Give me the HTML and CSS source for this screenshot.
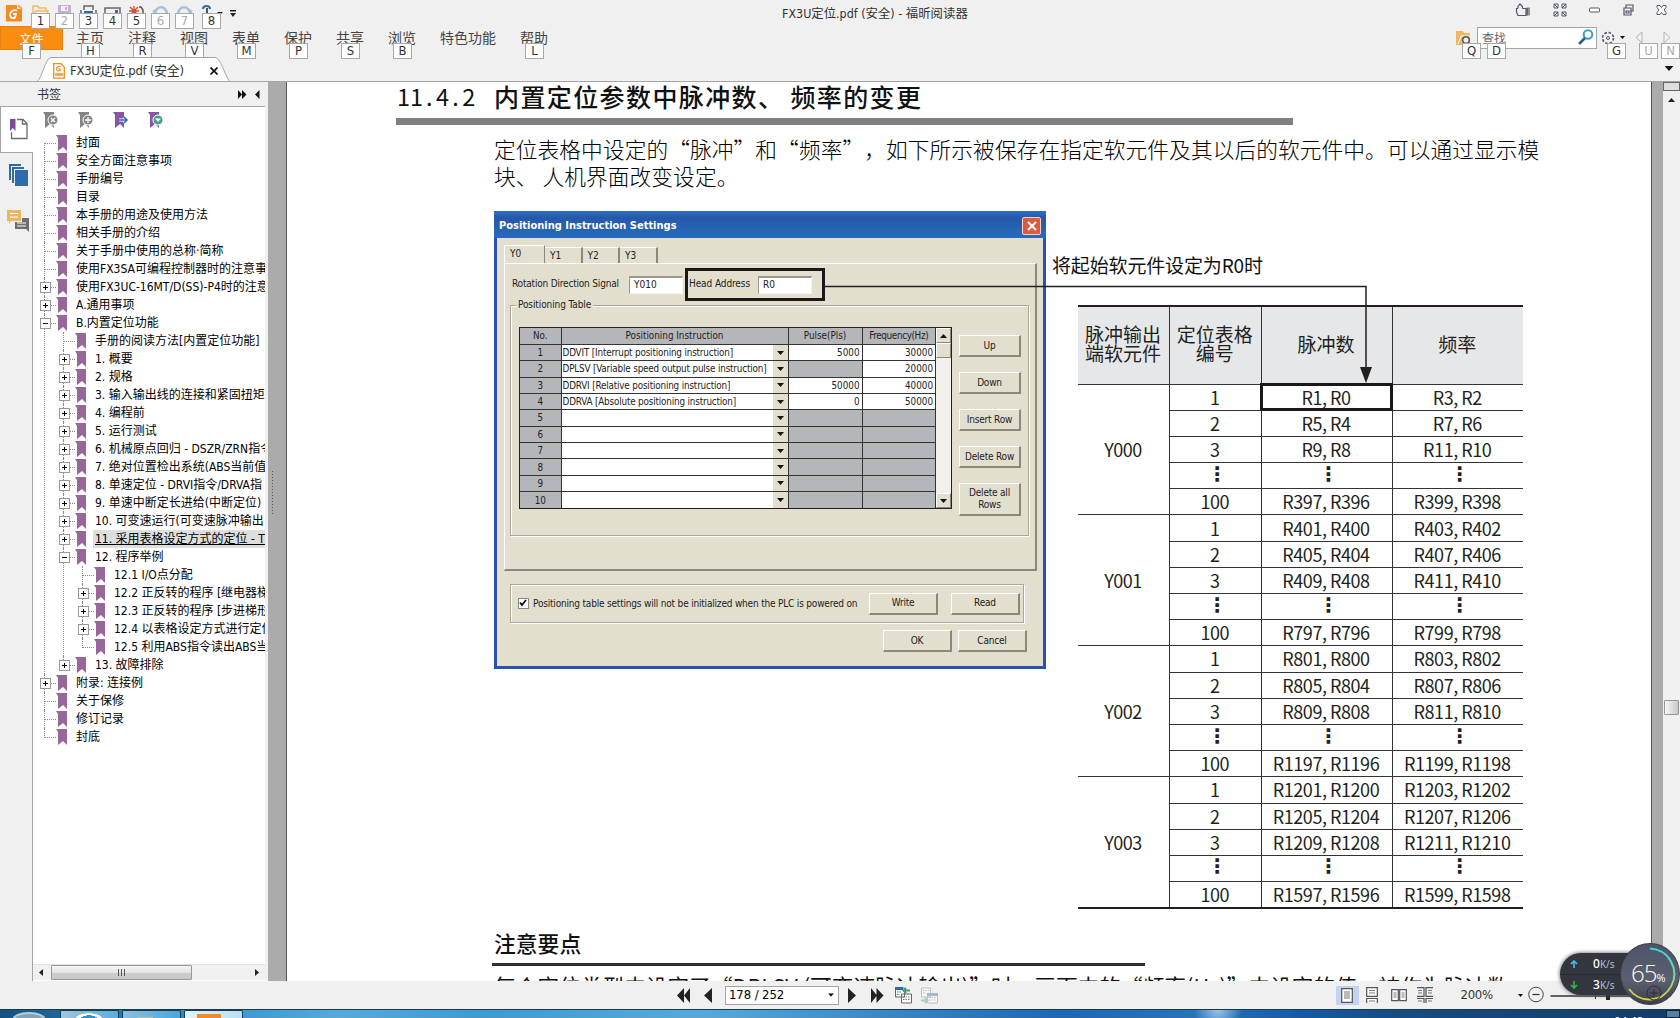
FILE: index.html
```html
<!DOCTYPE html>
<html lang="zh-CN">
<head>
<meta charset="utf-8">
<title>FX3U定位.pdf (安全) - 福昕阅读器</title>
<link rel="stylesheet" href="styles.css">
</head>
<body>
<svg width="0" height="0" class="defs">
  <symbol id="bm" viewBox="0 0 12 16"><path d="M0 0h11v16l-4-4-5 4V3z" fill="#996699"/></symbol>
  <symbol id="tri" viewBox="0 0 7 4"><path d="M0 0h7L3.500 4z" fill="#111"/></symbol>
</svg>
<div class="app">
  <header class="top">
    <div class="title-row">
      <svg class="logo" width="17" height="17" viewBox="0 0 17 17"><path d="M0 0h11v4h5v12.500H0z" fill="#f58a1f"/><path d="M12 0l4 4" stroke="#f58a1f" stroke-width="1.500"/><path d="M11 5.500C7 4 4 7 4 10s3 4 5 2.500L10 9H7" fill="none" stroke="#fff" stroke-width="1.800"/></svg>
      <div class="quick">
        <div class="q"><svg width="17" height="12" viewBox="0 0 17 12"><path d="M1 12V1h5l1 2h7v3M1 12L4 6h12l-2 6" fill="none" stroke="#eebb66" stroke-width="1.500"/></svg><kbd>1</kbd></div>
        <div class="q"><svg width="17" height="12" viewBox="0 0 17 12"><path d="M2 0h13v12H2z" fill="#c5b0d3"/><path d="M5 1h7v5H5z" fill="#f0f0f0"/><path d="M9 2h2v3H9z" fill="#c5b0d3"/></svg><kbd class="off">2</kbd></div>
        <div class="q"><svg width="17" height="12" viewBox="0 0 17 12"><path d="M4 5V1h9v4M1 5v7h15V5" fill="none" stroke="#666" stroke-width="1.500"/><path d="M4 6h9v6H4z" fill="#2b6cb0"/></svg><kbd>3</kbd></div>
        <div class="q"><svg width="17" height="12" viewBox="0 0 17 12"><path d="M1 12V3h15v9" fill="none" stroke="#666" stroke-width="1.500"/><path d="M11 5h3v3h-3z" fill="#2b6cb0"/></svg><kbd>4</kbd></div>
        <div class="q"><svg width="17" height="12" viewBox="0 0 17 12"><path d="M6 1v10M1 6h10M2 2l8 8M10 2l-8 8" stroke="#d34a35" stroke-width="1.300"/><path d="M11 2h2l2 3v7" fill="none" stroke="#555" stroke-width="1.500"/></svg><kbd>5</kbd></div>
        <div class="q"><svg width="17" height="12" viewBox="0 0 17 12"><path d="M1 7l3-2M3 9C4 0 14 0 15 9" fill="none" stroke="#a5c0dc" stroke-width="2.500"/></svg><kbd class="off">6</kbd></div>
        <div class="q"><svg width="17" height="12" viewBox="0 0 17 12"><path d="M16 7l-3-2M2 9C3 0 13 0 14 9" fill="none" stroke="#a5c0dc" stroke-width="2.500"/></svg><kbd class="off">7</kbd></div>
        <div class="q last"><svg width="17" height="12" viewBox="0 0 17 12"><path d="M2 4c0-4 7-4 7 0" fill="none" stroke="#2b6cb0" stroke-width="2"/><path d="M6 3v9M3 12V9" stroke="#555" stroke-width="2"/></svg><kbd>8</kbd></div>
      </div>
      <svg class="qcarets" width="20" height="8" viewBox="0 0 20 8"><path d="M0 2h6L3 5zM13 3h6l-3 4zM13 0h6v1.400h-6z" fill="#222"/></svg>
      <div class="window-title">FX3U定位.pdf (安全) - 福昕阅读器</div>
      <div class="win-buttons">
        <svg width="15" height="14" viewBox="0 0 15 14"><path d="M3 5.500H1.500V9L3 12.500h8V5.500H7.500M3 5.500V3.500L5 1l2.500 2.500v2M12.300 4.500v8M14 4.500v8" fill="none" stroke="#53566b" stroke-width="1.200"/></svg>
        <svg width="14" height="14" viewBox="0 0 14 14"><path d="M1 5V1h4v4zM9 5V1h4v4zM1 13V9h4v4zM9 13V9h4v4zM1 1l4 4M13 1L9 5M1 13l4-4M13 13L9 9" fill="none" stroke="#53566b"/></svg>
        <svg width="11" height="14" viewBox="0 0 11 14"><rect x=".5" y="5" width="10" height="4" rx="1" fill="#fff" stroke="#53566b"/></svg>
        <svg width="11" height="14" viewBox="0 0 11 14"><path d="M3 5V2h7v6H8M1 5h7v7H1zM3 8h3v2H3z" fill="none" stroke="#53566b" stroke-width="1.200"/></svg>
        <svg width="11" height="14" viewBox="0 0 11 14"><path d="M1 2.500h3l1.500 2 1.500-2h3v2L8 7l2 2.500v2H7l-1.500-2-1.500 2H1v-2L3 7 1 4.500z" fill="#fff" stroke="#53566b"/></svg>
      </div>
    </div>
    <div class="menu-row">
      <div class="file">文件<kbd>F</kbd></div>
      <nav class="menu">
        <div class="m">主页<kbd>H</kbd></div><div class="m">注释<kbd>R</kbd></div><div class="m">视图<kbd>V</kbd></div><div class="m">表单<kbd>M</kbd></div><div class="m">保护<kbd>P</kbd></div><div class="m">共享<kbd>S</kbd></div><div class="m">浏览<kbd>B</kbd></div><div class="m wide">特色功能</div><div class="m">帮助<kbd>L</kbd></div>
      </nav>
      <div class="find">
        <svg class="fold" width="15" height="14" viewBox="0 0 15 14"><path d="M0 0h7l1 2h6v12H0z" fill="#edb766"/><path d="M2 13l3-8h9" stroke="#fff" fill="none"/><circle cx="10" cy="9" r="3.300" fill="#eee" stroke="#555" stroke-width="1.500"/></svg>
        <div class="find-box"><span>查找</span><svg width="16" height="16" viewBox="0 0 16 16"><circle cx="10" cy="5.500" r="4.300" fill="none" stroke="#3d9fc4" stroke-width="2"/><path d="M7 9l-6 6" stroke="#2b5c98" stroke-width="2.600"/></svg></div>
        <svg class="gear" width="14" height="14" viewBox="0 0 14 14"><circle cx="7" cy="7" r="5.500" fill="none" stroke="#53566b" stroke-width="1.600" stroke-dasharray="2.600 1.700"/><circle cx="7" cy="7" r="1.500" fill="none" stroke="#53566b"/></svg>
        <svg class="gc" width="5" height="3" viewBox="0 0 7 4"><use href="#tri"/></svg>
        <svg class="nv" width="35" height="14" viewBox="0 0 35 14"><path d="M7 1v11L1 6.500zM29 1v11l6-5.500z" fill="none" stroke="#b4b4bc"/></svg>
        <kbd class="k1">Q</kbd><kbd class="k2">D</kbd><kbd class="k3">G</kbd><kbd class="k4 off">U</kbd><kbd class="k5 off">N</kbd>
      </div>
    </div>
    <div class="tab-row">
      <svg class="tab-shape" width="194" height="25" viewBox="0 0 194 25"><path d="M0 24.500C5 22 8 1 14 .5H178C184 .5 188 20 193 24.500z" fill="#fff" stroke="#a5a5a5"/></svg>
      <div class="tab">
        <svg width="12" height="16" viewBox="0 0 12 16"><path d="M.7.700H8l3.300 3.500v11H.7z" fill="#fff" stroke="#f58a1f" stroke-width="1.300"/><path d="M7.500 4C5 3 3.500 4.500 3.500 6S5 8.500 7 7.500V6H5.500" stroke="#f58a1f" fill="none" stroke-width="1.200"/><path d="M2 10h8v3H2z" fill="#f58a1f" opacity=".75"/></svg>
        <span>FX3U定位.pdf (安全)</span>
        <svg class="tab-x" width="8" height="8" viewBox="0 0 8 8"><path d="M.5.500l7 7M7.500.500l-7 7" stroke="#111" stroke-width="1.700"/></svg>
      </div>
      <svg class="tab-menu" width="10" height="5" viewBox="0 0 7 4"><use href="#tri"/></svg>
    </div>
  </header>

  <main class="work">
    <aside class="side">
      <div class="side-head"><span>书签</span><svg width="22" height="9" viewBox="0 0 22 9"><path d="M0 0l4 4.500L0 9zM4 0l4.500 4.500L4 9zM21.500 0v9L17 4.500z" fill="#111"/></svg></div>
      <div class="side-body">
        <div class="rail">
          <div class="rail-tab"><svg width="18" height="22" viewBox="0 0 18 22"><path d="M7 1.500h6l4 4V20.500H1.500V14M12.500 1.500v4.500H17" fill="none" stroke="#6b6b6b" stroke-width="1.300"/><path d="M0 1h5.500v12L2.800 10 0 13z" fill="#7c4f95"/></svg></div>
          <svg width="19" height="22" viewBox="0 0 19 22"><path d="M0 0h12v2H2v14H0zM3 3h12v2H5v14H3zM6 6h13v16H6z" fill="#2e6bab"/></svg>
          <svg width="23" height="22" viewBox="0 0 23 22"><path d="M0 0h14v11H4l-2 3v-3H0z" fill="#eab765"/><path d="M3 3.500h8M3 7h8" stroke="#fff"/><path d="M15 8h7v14l-3-3H8v-7h7z" fill="#6e6e6e"/><path d="M10 13h9M10 16h9" stroke="#fff"/></svg>
        </div>
        <div class="panel">
          <div class="tools">
            <svg width="16" height="17" viewBox="0 0 16 17"><path d="M0 0h11v16l-4-4-5 4V3z" fill="#858585"/><circle cx="10" cy="8" r="5" fill="#858585" stroke="#fff"/><path d="M8 6l4 4M12 6l-4 4" stroke="#fff" stroke-width="1.300"/></svg>
            <svg width="16" height="17" viewBox="0 0 16 17"><path d="M0 0h11v16l-4-4-5 4V3z" fill="#858585"/><circle cx="10" cy="8" r="5" fill="#858585" stroke="#fff"/><path d="M7 8h6M10 5v6" stroke="#fff" stroke-width="1.300"/></svg>
            <svg width="16" height="17" viewBox="0 0 16 17"><path d="M0 0h11v16l-4-4-5 4V3z" fill="#8a55a4"/><path d="M6 8h8M11 5l3 3-3 3" fill="none" stroke="#fff" stroke-width="3"/><path d="M6 8h8M11 5l3 3-3 3" fill="none" stroke="#2e6bab" stroke-width="1.500"/></svg>
            <svg width="16" height="17" viewBox="0 0 16 17"><path d="M0 0h11v16l-4-4-5 4V3z" fill="#8a55a4"/><circle cx="10" cy="8" r="5" fill="#45a27c" stroke="#fff"/><path d="M7 6.500h6L10 10z" fill="#fff"/></svg>
          </div>
          <ul class="tree">
            <li><div class="row"><svg><use href="#bm"/></svg><span>封面</span></div></li>
            <li><div class="row"><svg><use href="#bm"/></svg><span>安全方面注意事项</span></div></li>
            <li><div class="row"><svg><use href="#bm"/></svg><span>手册编号</span></div></li>
            <li><div class="row"><svg><use href="#bm"/></svg><span>目录</span></div></li>
            <li><div class="row"><svg><use href="#bm"/></svg><span>本手册的用途及使用方法</span></div></li>
            <li><div class="row"><svg><use href="#bm"/></svg><span>相关手册的介绍</span></div></li>
            <li><div class="row"><svg><use href="#bm"/></svg><span>关于手册中使用的总称·简称</span></div></li>
            <li><div class="row"><svg><use href="#bm"/></svg><span>使用FX3SA可编程控制器时的注意事</span></div></li>
            <li><div class="row plus"><svg><use href="#bm"/></svg><span>使用FX3UC-16MT/D(SS)-P4时的注意</span></div></li>
            <li><div class="row plus"><svg><use href="#bm"/></svg><span>A.通用事项</span></div></li>
            <li><div class="row minus"><svg><use href="#bm"/></svg><span>B.内置定位功能</span></div>
              <ul>
                <li><div class="row"><svg><use href="#bm"/></svg><span>手册的阅读方法[内置定位功能]</span></div></li>
                <li><div class="row plus"><svg><use href="#bm"/></svg><span>1. 概要</span></div></li>
                <li><div class="row plus"><svg><use href="#bm"/></svg><span>2. 规格</span></div></li>
                <li><div class="row plus"><svg><use href="#bm"/></svg><span>3. 输入输出线的连接和紧固扭矩</span></div></li>
                <li><div class="row plus"><svg><use href="#bm"/></svg><span>4. 编程前</span></div></li>
                <li><div class="row plus"><svg><use href="#bm"/></svg><span>5. 运行测试</span></div></li>
                <li><div class="row plus"><svg><use href="#bm"/></svg><span>6. 机械原点回归 - DSZR/ZRN指令</span></div></li>
                <li><div class="row plus"><svg><use href="#bm"/></svg><span>7. 绝对位置检出系统(ABS当前值</span></div></li>
                <li><div class="row plus"><svg><use href="#bm"/></svg><span>8. 单速定位 - DRVI指令/DRVA指</span></div></li>
                <li><div class="row plus"><svg><use href="#bm"/></svg><span>9. 单速中断定长进给(中断定位)</span></div></li>
                <li><div class="row plus"><svg><use href="#bm"/></svg><span>10. 可变速运行(可变速脉冲输出</span></div></li>
                <li><div class="row plus current"><svg><use href="#bm"/></svg><span>11. 采用表格设定方式的定位 - T</span></div></li>
                <li><div class="row minus"><svg><use href="#bm"/></svg><span>12. 程序举例</span></div>
                  <ul>
                    <li><div class="row"><svg><use href="#bm"/></svg><span>12.1 I/O点分配</span></div></li>
                    <li><div class="row plus"><svg><use href="#bm"/></svg><span>12.2 正反转的程序 [继电器梯</span></div></li>
                    <li><div class="row plus"><svg><use href="#bm"/></svg><span>12.3 正反转的程序 [步进梯形</span></div></li>
                    <li><div class="row plus"><svg><use href="#bm"/></svg><span>12.4 以表格设定方式进行定位</span></div></li>
                    <li><div class="row"><svg><use href="#bm"/></svg><span>12.5 利用ABS指令读出ABS当</span></div></li>
                  </ul>
                </li>
                <li><div class="row plus"><svg><use href="#bm"/></svg><span>13. 故障排除</span></div></li>
              </ul>
            </li>
            <li><div class="row plus"><svg><use href="#bm"/></svg><span>附录: 连接例</span></div></li>
            <li><div class="row"><svg><use href="#bm"/></svg><span>关于保修</span></div></li>
            <li><div class="row"><svg><use href="#bm"/></svg><span>修订记录</span></div></li>
            <li><div class="row"><svg><use href="#bm"/></svg><span>封底</span></div></li>
          </ul>
          <div class="hscroll">
            <svg width="4" height="7" viewBox="0 0 4 7"><path d="M4 0v7L0 3.500z" fill="#222"/></svg>
            <div class="hthumb"><i></i><i></i><i></i></div>
            <svg width="4" height="7" viewBox="0 0 4 7"><path d="M0 0v7l4-3.500z" fill="#222"/></svg>
          </div>
        </div>
      </div>
    </aside>
    <div class="splitter"><i></i></div>

    <article class="page">
      <h1><span class="num">11<i>.</i>4<i>.</i>2</span><span class="h-a">内置定位参数中脉冲数、</span><span class="h-b">频率的变更</span></h1>
      <p class="intro">定位表格中设定的“脉冲”和“频率”，如下所示被保存在指定软元件及其以后的软元件中。可以通过显示模<br>块、&nbsp;人机界面改变设定。</p>
      <section class="figure">
        <div class="dialog">
          <div class="dlg-title"><b>Positioning Instruction Settings</b><span class="dlg-close"><svg width="10" height="10" viewBox="0 0 10 10"><path d="M1 1l8 8M9 1L1 9" stroke="#fff" stroke-width="2"/></svg></span></div>
          <div class="dlg-tabs"><span class="on">Y0</span><span>Y1</span><span>Y2</span><span>Y3</span></div>
          <div class="dlg-panel">
            <div class="params">
              <label class="rot">Rotation Direction Signal</label><span class="inp">Y010</span>
              <div class="head-box"><label>Head Address</label><span class="inp">R0</span></div>
            </div>
            <div class="group">
              <span class="legend">Positioning Table</span>
              <div class="grid-wrap">
                <table class="pt">
                  <colgroup><col class="c1"><col class="c2"><col class="cd"><col class="c3"><col></colgroup>
                  <tr><th>No.</th><th colspan="2">Positioning Instruction</th><th>Pulse(Pls)</th><th class="c4">Frequency(Hz)</th></tr>
                  <tr><th>1</th><td class="n">DDVIT [Interrupt positioning instruction]</td><td class="d"><svg><use href="#tri"/></svg></td><td>5000</td><td>30000</td></tr>
                  <tr><th>2</th><td class="n">DPLSV [Variable speed output pulse instruction]</td><td class="d"><svg><use href="#tri"/></svg></td><td class="g"></td><td>20000</td></tr>
                  <tr><th>3</th><td class="n">DDRVI [Relative positioning instruction]</td><td class="d"><svg><use href="#tri"/></svg></td><td>50000</td><td>40000</td></tr>
                  <tr><th>4</th><td class="n">DDRVA [Absolute positioning instruction]</td><td class="d"><svg><use href="#tri"/></svg></td><td>0</td><td>50000</td></tr>
                  <tr><th>5</th><td class="n"></td><td class="d"><svg><use href="#tri"/></svg></td><td class="g"></td><td class="g"></td></tr>
                  <tr><th>6</th><td class="n"></td><td class="d"><svg><use href="#tri"/></svg></td><td class="g"></td><td class="g"></td></tr>
                  <tr><th>7</th><td class="n"></td><td class="d"><svg><use href="#tri"/></svg></td><td class="g"></td><td class="g"></td></tr>
                  <tr><th>8</th><td class="n"></td><td class="d"><svg><use href="#tri"/></svg></td><td class="g"></td><td class="g"></td></tr>
                  <tr><th>9</th><td class="n"></td><td class="d"><svg><use href="#tri"/></svg></td><td class="g"></td><td class="g"></td></tr>
                  <tr><th>10</th><td class="n"></td><td class="d"><svg><use href="#tri"/></svg></td><td class="g"></td><td class="g"></td></tr>
                </table>
                <div class="pt-scroll"><span><svg class="up"><use href="#tri"/></svg></span><span></span><em></em><span><svg><use href="#tri"/></svg></span></div>
              </div>
              <div class="side-btns"><span class="btn">Up</span><span class="btn">Down</span><span class="btn">Insert Row</span><span class="btn">Delete Row</span><span class="btn two">Delete all<br>Rows</span></div>
            </div>
          </div>
          <div class="keep"><span class="chk"><svg width="8" height="8" viewBox="0 0 8 8"><path d="M1 3.500l2 2.500 4-5" fill="none" stroke="#111" stroke-width="1.800"/></svg></span><label>Positioning table settings will not be initialized when the PLC is powered on</label><span class="btn">Write</span><span class="btn">Read</span></div>
          <div class="dlg-foot"><span class="btn">OK</span><span class="btn">Cancel</span></div>
        </div>
        <div class="mapping">
          <div class="note">将起始软元件设定为R0时</div>
          <table class="map">
            <tr class="hd"><th class="a">脉冲输出<br>端软元件</th><th class="b">定位表格<br>编号</th><th class="c">脉冲数</th><th>频率</th></tr>
            <tr><td rowspan="5">Y000</td><td>1</td><td class="hot">R1, R0</td><td>R3, R2</td></tr>
            <tr><td>2</td><td>R5, R4</td><td>R7, R6</td></tr>
            <tr><td>3</td><td>R9, R8</td><td>R11, R10</td></tr>
            <tr class="dots"><td>⋮</td><td>⋮</td><td>⋮</td></tr>
            <tr><td>100</td><td>R397, R396</td><td>R399, R398</td></tr>
            <tr><td rowspan="5">Y001</td><td>1</td><td>R401, R400</td><td>R403, R402</td></tr>
            <tr><td>2</td><td>R405, R404</td><td>R407, R406</td></tr>
            <tr><td>3</td><td>R409, R408</td><td>R411, R410</td></tr>
            <tr class="dots"><td>⋮</td><td>⋮</td><td>⋮</td></tr>
            <tr><td>100</td><td>R797, R796</td><td>R799, R798</td></tr>
            <tr><td rowspan="5">Y002</td><td>1</td><td>R801, R800</td><td>R803, R802</td></tr>
            <tr><td>2</td><td>R805, R804</td><td>R807, R806</td></tr>
            <tr><td>3</td><td>R809, R808</td><td>R811, R810</td></tr>
            <tr class="dots"><td>⋮</td><td>⋮</td><td>⋮</td></tr>
            <tr><td>100</td><td>R1197, R1196</td><td>R1199, R1198</td></tr>
            <tr><td rowspan="5">Y003</td><td>1</td><td>R1201, R1200</td><td>R1203, R1202</td></tr>
            <tr><td>2</td><td>R1205, R1204</td><td>R1207, R1206</td></tr>
            <tr><td>3</td><td>R1209, R1208</td><td>R1211, R1210</td></tr>
            <tr class="dots"><td>⋮</td><td>⋮</td><td>⋮</td></tr>
            <tr><td>100</td><td>R1597, R1596</td><td>R1599, R1598</td></tr>
          </table>
        </div>
        <svg class="leader" width="550" height="100" viewBox="0 0 550 100"><path d="M0 1.500H541V84" fill="none" stroke="#231f20" stroke-width="1.500"/><path d="M535 82h12l-6 16z" fill="#231f20"/></svg>
      </section>
      <h2>注意要点</h2>
      <p class="cut">每个定位类型中设定了“DPLSV (可变速脉冲输出)”时，画面中的“频率(Hz)”中设定的值，被作为脉冲数</p>
    </article>
    <div class="gutter"></div>
    <div class="vscroll"><div class="vsplit"></div><svg width="7" height="4" viewBox="0 0 7 4"><path d="M0 4h7L3.500 0z" fill="#222"/></svg><div class="vthumb"></div></div>
  </main>

  <footer class="status">
    <div class="pager">
      <svg width="14" height="15" viewBox="0 0 14 15"><path d="M7 0v15L0 7.500zM13 0v15L7 7.500z" fill="#222"/></svg>
      <svg width="9" height="15" viewBox="0 0 9 15"><path d="M8 0v15L0 7.500z" fill="#222"/></svg>
      <div class="page-box"><span>178 / 252</span><svg width="6" height="4" viewBox="0 0 7 4"><use href="#tri"/></svg></div>
      <svg width="9" height="15" viewBox="0 0 9 15"><path d="M1 0v15l8-7.500z" fill="#222"/></svg>
      <svg width="14" height="15" viewBox="0 0 14 15"><path d="M1 0l6 7.500L1 15zM6.500 0l7 7.500-7 7.500z" fill="#222"/></svg>
      <svg width="17" height="17" viewBox="0 0 17 17"><path d="M.5 1h9v9h-9zM6.500 7h10v9h-10z" fill="#fff" stroke="#666"/><path d="M0 0h8v3H0z" fill="#2b6cb0"/><path d="M9 3.500h6M11 1L8.500 3.500 11 6" fill="none" stroke="#3e9f78" stroke-width="2"/><path d="M8 10h7M8 12.500h7M2 5h4M2 7.500h3" stroke="#777" stroke-dasharray="1.500 1"/></svg>
      <svg width="17" height="17" viewBox="0 0 17 17" opacity=".4"><path d="M.5 1h9v9h-9zM6.500 7h10v9h-10z" fill="#fff" stroke="#777"/><path d="M6 6h11v3H6z" fill="#2b6cb0"/><path d="M0 13.500h6M4 11l2.500 2.500L4 16" fill="none" stroke="#3e9f78" stroke-width="2"/><path d="M8 10.500h7M8 13h7M2 3.500h6M2 6h3" stroke="#777" stroke-dasharray="1.500 1"/></svg>
    </div>
    <div class="views">
      <span class="sel"><svg width="12" height="15" viewBox="0 0 12 15"><path d="M.7.700h10.600v13.600H.7z" fill="#fff" stroke="#555" stroke-width="1.200"/><path d="M3 4h6M3 6h6M3 8h6M3 10h6" stroke="#777"/></svg></span>
      <svg width="12" height="16" viewBox="0 0 12 16"><path d="M.7.700h10.600v8.600H.7zM.7 16v-4.500h10.600V16" fill="#fff" stroke="#555" stroke-width="1.200"/><path d="M3 3.500h6M3 6h6M3 14h6" stroke="#777"/></svg>
      <svg width="16" height="13" viewBox="0 0 16 13"><path d="M.7.700h6.600v11H.7zM8.700.700h6.600v11H8.700z" fill="#fff" stroke="#555" stroke-width="1.200"/><path d="M2.500 4h3M2.500 6h3M2.500 8h3M10.500 4h3M10.500 6h3M10.500 8h3" stroke="#777"/></svg>
      <svg width="16" height="16" viewBox="0 0 16 16"><path d="M0 .700h7v8.600H0M16 .700H9v8.600h7M0 11.500h7V16M16 11.500H9V16" fill="none" stroke="#555" stroke-width="1.200"/><path d="M1 3.500h4M1 6h4M11 3.500h4M11 6h4M1 14h4M11 14h4" stroke="#777"/></svg>
    </div>
    <div class="zoom"><span>200%</span><svg width="5" height="3" viewBox="0 0 7 4"><use href="#tri"/></svg>
      <svg width="136" height="18" viewBox="0 0 136 18"><circle cx="8" cy="8.500" r="7.300" fill="none" stroke="#444"/><path d="M4.500 8.500h7" stroke="#333" stroke-width="1.200"/><path d="M22.500 10h90" stroke="#333" stroke-width="1.500"/><path d="M67.500 7v6" stroke="#333"/><path d="M78 6h4v8h-4z" fill="#222"/><circle cx="126" cy="8.500" r="7.300" fill="none" stroke="#444"/></svg>
    </div>
  </footer>
  <div class="taskbar"><span class="orb"></span><span class="task t1"></span><span class="task t2"></span><span class="task t3"></span><span class="clock">14:43</span><span class="desk"></span></div>

  <div class="meter">
    <div class="pill">
      <div><svg width="8" height="8" viewBox="0 0 8 8"><path d="M4 8V1M1 4l3-3 3 3" fill="none" stroke="#4db5ee" stroke-width="1.700"/></svg><b>0</b><small>K/s</small></div>
      <div><svg width="8" height="8" viewBox="0 0 8 8"><path d="M4 0v7M1 4l3 3 3-3" fill="none" stroke="#31b24a" stroke-width="1.700"/></svg><b>3</b><small>K/s</small></div>
    </div>
    <div class="ball">
      <svg width="60" height="62" viewBox="0 0 60 62"><defs><linearGradient id="arc" x1="0" y1="0" x2="0" y2="1"><stop offset="0" stop-color="#3fd3e0"/><stop offset=".55" stop-color="#6fdc9a"/><stop offset="1" stop-color="#e0cf3c"/></linearGradient></defs><path d="M30 5.500A25 25.500 0 1 1 9 46" fill="none" stroke="url(#arc)" stroke-width="2"/><circle cx="34" cy="50" r="7" fill="none" stroke="#2d303a"/><path d="M30 50h8M34 46v8" stroke="#2d303a"/></svg>
      <span>65<small>%</small></span>
    </div>
  </div>
</div>
</body>
</html>
```
FILE: styles.css
```css
* { box-sizing: border-box; }
body {
  margin: 0;
  width: 1680px;
  height: 1018px;
  overflow: hidden;
  background: #f0f0f0;
  font: 12px/18px "DejaVu Sans Condensed", "Noto Sans CJK SC", sans-serif;
  color: #000;
}
svg { display: block; flex: none; }
.defs { position: absolute; }
.app { position: relative; display: flex; flex-direction: column; width: 1680px; height: 1018px; overflow: hidden; }

kbd {
  width: 19px; height: 16px;
  border: 1px solid #a8a8a8;
  background: #fff;
  font: 13px/14px "DejaVu Sans Condensed", sans-serif;
  text-align: center;
  color: #333;
}
kbd.off { color: #aaa; }

/* header */
.top { height: 82px; flex: none; border-bottom: 1px solid #a5a5a5; }
.title-row { display: flex; height: 26px; position: relative; }
.logo { margin: 5px 0 0 6px; }
.quick { display: flex; margin-left: 8px; gap: 5px; }
.q { width: 19px; padding-top: 5px; position: relative; }
.q svg { margin-left: 1px; }
.q kbd { position: absolute; left: 0; top: 13px; z-index: 2; }
.q.last { margin-left: 3px; }
.q.last svg { margin-left: -1px; }
.qcarets { margin: 10px 0 0 -4px; }
.window-title { margin-left: 545px; padding-top: 4px; font-size: 12.400px; line-height: 20px; color: #333; white-space: nowrap; width: 240px; }
.win-buttons { margin: 3px 13px 0 auto; display: flex; gap: 22.500px; }
.menu-row { display: flex; height: 31px; font-size: 14px; color: #444; }
.file { width: 63px; height: 24px; background: #fa8c0f; border: 1px solid #e8820e; color: #fff; font-size: 12px; line-height: 27px; text-align: center; position: relative; }
.file kbd { position: absolute; left: 21px; top: 16px; }
.menu { display: flex; margin-left: 12px; gap: 22px; }
.m { width: 30px; text-align: center; line-height: 24px; position: relative; white-space: nowrap; }
.m kbd { position: absolute; left: 6px; top: 17px; }
.m.wide { width: 58px; }
.find { position: relative; display: flex; margin-left: auto; width: 224px; }
.fold { margin-top: 5px; }
.find-box { margin: 1px 0 0 6px; width: 120px; height: 22px; border: 1px solid #a5a5a5; background: #fff; display: flex; justify-content: space-between; padding: 1px 2px 0 4px; font-size: 12px; color: #666; line-height: 20px; }
.gear { margin: 5px 0 0 4px; }
.gc { margin: 10px 0 0 5px; }
.nv { margin: 5px 0 0 10px; }
.find kbd { position: absolute; top: 17px; }
.k1 { left: 6px; } .k2 { left: 31px; } .k3 { left: 151px; } .k4 { left: 183px; } .k5 { left: 205px; }
.tab-row { height: 25px; position: relative; display: flex; }
.tab-shape { position: absolute; left: 37px; top: 0; }
.tab { position: relative; display: flex; align-items: center; height: 24px; margin: 2px 0 0 53px; gap: 5px; width: 165px; font-size: 13px; color: #333; white-space: nowrap; letter-spacing: -.3px; }
.tab-x { margin-left: auto; }
.tab-menu { margin: 9px 6px 0 auto; }

/* work area */
.work { display: flex; height: 899px; flex: none; }
.side { width: 268px; flex: none; display: flex; flex-direction: column; }
.side-head { height: 24px; display: flex; justify-content: space-between; padding: 5px 8px 0 37px; color: #333; line-height: 17px; }
.side-head svg { margin-top: 3px; }
.side-body { display: flex; flex: 1; width: 265px; border-top: 1px solid #a5a5a5; min-height: 0; }
.rail { width: 33px; flex: none; border-right: 1px solid #a5a5a5; }
.rail-tab { width: 33px; height: 46px; background: #fff; border: 1px solid #a5a5a5; border-width: 0 0 1px 1px; padding: 11px 0 0 9px; }
.rail > svg { margin: 11px 0 0 9px; }
.rail > svg + svg { margin: 24px 0 0 7px; }
.panel { flex: 1; background: #fff; min-width: 0; display: flex; flex-direction: column; }
.tools { display: flex; gap: 19px; height: 27px; flex: none; padding: 5px 0 0 10px; }
.tree, .tree ul { list-style: none; margin: 0; padding: 0; }
.tree { flex: 1; overflow: hidden; padding-left: 7px; }
.tree ul { padding-left: 19px; }
.tree li { position: relative; }
.tree li::before { content: ""; position: absolute; left: 4px; top: 0; height: 100%; border-left: 1px dotted #888; }
.tree li:last-child::before { height: 10px; }
.tree > li:first-child::before { top: 9px; height: calc(100% - 9px); }
.row { position: relative; display: flex; align-items: center; height: 18px; padding-left: 16px; white-space: nowrap; font-size: 12px; }
.row::before { content: ""; position: absolute; left: 5px; top: 9px; width: 11px; border-top: 1px dotted #888; }
.row.plus::after, .row.minus::after { position: absolute; left: 0; top: 4px; width: 9px; height: 9px; border: 1px solid #999; content: ""; background: linear-gradient(#000, #000) center / 5px 1px no-repeat, #fff; }
.row.plus::after { background: linear-gradient(#000, #000) center / 5px 1px no-repeat, linear-gradient(#000, #000) center / 1px 5px no-repeat, #fff; }
.row svg { width: 12px; height: 16px; margin-right: 6px; }
.row span { padding-left: 2px; height: 18px; line-height: 19px; }
.current span { background: #dedede; text-decoration: underline; width: 172px; overflow: hidden; }
.hscroll { height: 16px; flex: none; display: flex; align-items: center; padding: 0 6px; background: #f0f0f0; border-top: 1px solid #e0e0e0; margin-bottom: 1px; }
.hthumb { width: 141px; height: 15px; margin: 0 auto 0 8px; border: 1px solid #979797; border-radius: 1px; background: linear-gradient(#f5f5f5, #e4e4e6 50%, #cdcdd0 51%, #c8c8cc); display: flex; gap: 2px; justify-content: center; align-items: center; }
.hthumb i { width: 1px; height: 7px; background: #555; }
.splitter { width: 19px; flex: none; background: #ababab; border-right: 1px solid #555; }
.splitter i { display: block; margin: 388px 0 0 3px; width: 4px; height: 44px; background: radial-gradient(circle, #555 .7px, transparent .9px) 0 0 / 3px 3px; }
.gutter { width: 12px; flex: none; background: #ababab; border-left: 1px solid #555; }
.vscroll { width: 17px; flex: none; background: #f0f0f0; display: flex; flex-direction: column; align-items: center; }
.vsplit { width: 17px; height: 9px; border: 1px solid #666; background: #ddd; }
.vscroll svg { margin-top: 7px; }
.vthumb { width: 15px; height: 15px; margin-top: 598px; border: 1px solid #979797; background: linear-gradient(90deg, #f8f8f8, #c8c8cc); border-radius: 1px; }

/* document page */
.page { width: 1364px; flex: none; height: 899px; background: #fff; overflow: hidden; font-family: "Noto Sans CJK SC", sans-serif; color: #111; }
h1 { display: flex; height: 43px; width: 897px; margin: 0 0 0 109px; border-bottom: 7px solid #7f7f7f; font-size: 25px; font-weight: 500; line-height: 28px; white-space: nowrap; }
.num { width: 98px; padding-left: 1px; font-size: 23.500px; font-weight: 400; }
.num i { display: inline-block; width: 13px; padding-left: 3px; font-style: normal; }
.h-a, .h-b { letter-spacing: 1.400px; }
.h-b { margin-left: 6px; }
.intro { margin: 11px 0 0 207px; width: 1100px; font-size: 21.700px; line-height: 26.500px; font-weight: 300; color: #000; white-space: nowrap; letter-spacing: .09px; text-spacing-trim: space-all; }
.figure { position: relative; display: flex; margin: 22px 0 0 207px; }
.dialog { width: 552px; height: 458px; flex: none; border: 3px solid #2a52ad; border-top: 0; background: #e2dfcf; font: 10px/14px "DejaVu Sans Condensed", sans-serif; color: #222; }
.dlg-title { height: 27px; margin: 0 -3px; display: flex; justify-content: space-between; align-items: center; padding: 2px 5px 0 5px; background: linear-gradient(#2e6fc6, #2757a8 25%, #2566b5 75%, #2a69bd); color: #fff; font-size: 11px; }
.dlg-close { width: 19px; height: 18px; border: 1px solid #f5d0c8; border-radius: 2px; background: #db5a41; display: flex; align-items: center; justify-content: center; }
.dlg-tabs { display: flex; align-items: flex-end; height: 25px; padding-left: 7px; }
.dlg-tabs span { width: 37.500px; height: 16px; padding: 1px 0 0 5px; border: 1px solid #fff; border-width: 1px 0 0; border-right: 2px solid #8a887c; }
.dlg-tabs .on { width: 41px; height: 18px; padding-top: 1px; border-left: 1px solid #fff; border-right-width: 1px; }
.dlg-panel { width: 533px; height: 308px; margin-left: 7px; border: 1px solid #fff; border-right: 2px solid #8a887c; border-bottom: 2px solid #8a887c; padding: 4px 0 0 5px; }
.params { display: flex; align-items: center; height: 33px; }
.rot { width: 119px; padding: 0 0 2px 2px; white-space: nowrap; letter-spacing: -.19px; }
.inp { width: 54px; height: 18px; background: #fff; border: 1px solid #9a988c; border-top-width: 2px; border-right-color: #f5f3ea; border-bottom-color: #f5f3ea; padding: 0 0 0 4px; }
.head-box { width: 140px; height: 33px; margin-left: 2px; border: 3px solid #1c1819; display: flex; align-items: center; white-space: nowrap; }
.head-box label { width: 70px; padding: 0 0 2px 1px; letter-spacing: -.1px; }
.group { position: relative; display: flex; width: 519px; height: 231px; margin-top: 4px; border: 1px solid #aaa798; box-shadow: 1px 1px #fff, inset 1px 1px #fff; }
.legend { position: absolute; left: 5px; top: -8px; padding: 0 2px; background: #e2dfcf; letter-spacing: -.1px; }
.grid-wrap { display: flex; height: 182px; margin: 21px 0 0 8px; border: 1px solid #222; }
.pt { border-collapse: collapse; width: 416px; height: 180px; table-layout: fixed; line-height: 13px; font-size: 9.800px; }
.pt th, .pt td { border: 1px solid #333; padding: 0 2px; height: 16.300px; font-weight: 400; text-align: right; background: #fff; white-space: nowrap; }
.pt tr:first-child > * { border-top: 0; }
.pt tr:last-child > * { border-bottom: 0; }
.pt th { background: #b5b6b9; text-align: center; border-left: 0; }
.c1 { width: 41px; } .c2 { width: 212px; } .cd { width: 15px; } .c3 { width: 74px; }
.pt .n { text-align: left; padding: 0 0 0 1px; border-right: 0; letter-spacing: -.16px; }
.pt td.d { background: #e2dfcf; border-left: 0; padding: 0 0 0 4px; }
.pt .d svg, .pt-scroll svg { width: 7px; height: 4px; }
.pt th.c4 { letter-spacing: -.35px; padding: 0; }
.pt td.g { background: #b5b6b9; }
.pt-scroll { width: 15px; display: flex; flex-direction: column; background: #f2f0ea; }
.pt-scroll span { height: 15px; background: #e2dfcf; border: 1px solid #fff; border-right-color: #8a887c; border-bottom-color: #8a887c; display: flex; align-items: center; justify-content: center; }
.pt-scroll em { flex: 1; }
.up { transform: rotate(180deg); }
.side-btns { display: flex; flex-direction: column; gap: 15px; margin: 29px 0 0 7px; }
.btn { display: flex; align-items: center; justify-content: center; width: 62px; height: 22px; border: 1px solid #fff; border-right: 2px solid #8a887c; border-bottom: 2px solid #8a887c; text-align: center; line-height: 12px; letter-spacing: -.2px; white-space: nowrap; }
.btn.two { height: 33px; }
.keep { width: 514px; height: 39px; margin: 13px 0 0 13px; border: 1px solid #aaa798; box-shadow: 1px 1px #fff, inset 1px 1px #fff; display: flex; align-items: center; padding-left: 7px; }
.chk { width: 11px; height: 11px; border: 1px solid #888; background: #fff; }
.keep label { width: 336px; margin: 0 0 0 4px; white-space: nowrap; letter-spacing: -.19px; }
.keep .btn, .dlg-foot .btn { width: 69px; }
.keep .btn + .btn { margin-left: 13px; }
.dlg-foot { display: flex; gap: 6px; margin: 7px 0 0 386px; }

.mapping { margin-left: 6px; }
.note { height: 94px; padding-top: 40px; font-size: 19px; line-height: 28px; white-space: nowrap; letter-spacing: -.15px; }
.map { margin-left: 26px; width: 445px; height: 603px; table-layout: fixed; border-collapse: collapse; border-top: 2px solid #231f20; border-bottom: 2px solid #231f20; color: #231f20; }
.map td, .map th { border: 1px solid #333; padding: 0 1px 1px 0; text-align: center; font-weight: 400; font-size: 18px; line-height: 20px; letter-spacing: -.45px; height: 26.200px; }
.map td:last-child, .map th:last-child { border-right: 0; }
.map td[rowspan], .map .a { border-left: 0; }
.map .hd th { height: 78px; background: #e6e7e9; padding-bottom: 4px; font-size: 19px; line-height: 19px; letter-spacing: 0; }
.map .a { width: 91.500px; } .map .b { width: 91.500px; } .map .c { width: 131px; }
.map .hot { outline: 3px solid #1c1819; outline-offset: -2px; }
.map .dots td { font-family: "DejaVu Sans", sans-serif; font-weight: 700; font-size: 20px; line-height: 18px; padding: 0 0 4px 3px; }
.leader { position: absolute; left: 331px; top: 74px; }
h2 { margin: 20px 0 0 205px; width: 653px; height: 37px; border-bottom: 3px solid #2e3132; padding: 2px 0 0 2px; font-size: 21.800px; line-height: 24px; font-weight: 500; }
.cut { margin: 5px 0 0 207px; font-size: 21.700px; line-height: 30px; white-space: nowrap; }

/* status bar */
.status { height: 29px; flex: none; display: flex; align-items: center; border-bottom: 1px solid #173a4c; }
.pager { display: flex; align-items: center; margin-left: 677px; gap: 13px; }
.page-box { width: 114px; height: 19px; border: 1px solid #a5a5a5; background: #fff; display: flex; align-items: center; justify-content: space-between; padding: 0 4px 0 3px; font-size: 13px; letter-spacing: -.1px; margin: 0 -5px 0 -1px; }
.pager > :nth-child(5) { margin-left: 1px; }
.pager > :nth-child(6) { margin-left: -2px; }
.pager > :nth-child(7) { margin-left: -4px; }
.views { display: flex; align-items: center; gap: 11px; margin-left: 397.500px; }
.views > :nth-child(3) { margin-left: 2px; }
.views > :nth-child(4) { margin-left: -1px; }
.sel { width: 23px; height: 19px; background: #c3d4f2; display: flex; align-items: center; justify-content: center; margin-right: -4px; }
.zoom { display: flex; align-items: center; margin-left: 28px; font-size: 13px; letter-spacing: -.3px; color: #333; }
.zoom span { width: 57px; }
.zoom svg + svg { margin-left: 5px; }

.taskbar { position: relative; height: 8px; flex: none; overflow: hidden; background: radial-gradient(ellipse 24px 22px at 1218px 0, #9cc4e6, transparent), linear-gradient(90deg, #14527f, #1d6698 60px, #3c9bd0 245px, #55aadd 340px, #3d9bd2 480px, #55aadb 700px, #1d68b3 1060px, #2874ba 1200px, #155aa5 1300px, #184b80 1400px, #153c67); display: flex; }
.orb { width: 34px; height: 16px; margin: 2px 14px 0 12px; border: 2px solid #b8ced9; border-radius: 50%; background: #7fa3b8; }
.task { width: 59px; border: 1px solid #0f3d5a; border-bottom: 0; border-radius: 2px 2px 0 0; margin-right: 3px; background: linear-gradient(90deg, #a3c5db, #5aaedd); }
.t1 { background: radial-gradient(ellipse 14px 6px at 28px 8px, #2b93d0 60%, #fff 62%, #fff 90%, transparent), linear-gradient(90deg, #a3c5db, #5aaedd); }
.t2 { background: linear-gradient(#d9bd7a, #d9bd7a) 15px 6px / 15px 3px no-repeat, linear-gradient(90deg, #8bbfdf, #4aa6da); }
.t3 { background: linear-gradient(#f58a1f, #f58a1f) 12px 3px / 24px 6px no-repeat, linear-gradient(90deg, #e3f3fa, #b9dff1); }
.clock { margin: 3px 23px 0 auto; color: #fff; font-size: 12px; line-height: 18px; letter-spacing: -.5px; }
.desk { width: 14px; border: 1px solid #0a2540; background: #5a7fa3; }

/* network meter floating over the window */
.meter { position: absolute; left: 1560px; top: 943px; width: 120px; height: 62px; }
.pill { position: absolute; left: 0; top: 10px; width: 90px; height: 42px; border-radius: 21px 0 0 21px; background: #33363f; box-shadow: 0 0 4px #555; }
.pill div { display: flex; align-items: center; height: 21px; padding-left: 10px; color: #fff; font: 12px/20px "Noto Sans", sans-serif; }
.pill div + div { border-top: 1px solid #282b33; }
.pill b { font-weight: 500; margin-left: 15px; font-size: 12px; }
.pill small { font-size: 10px; color: #b8bcc8; }
.ball { position: absolute; left: 60px; top: 0; width: 60px; height: 62px; border-radius: 50%; background: linear-gradient(#50546a, #5b5f70 60%, #3d404c); border: 1px solid #3b3e4a; overflow: hidden; }
.ball svg { position: absolute; left: -1px; top: -1px; }
.ball span { position: absolute; left: 10px; top: 12px; font: 300 24px/34px "Open Sans", sans-serif; color: #fff; letter-spacing: -1px; white-space: nowrap; }
.ball small { font-size: 11px; letter-spacing: 0; font-weight: 400; }
```
